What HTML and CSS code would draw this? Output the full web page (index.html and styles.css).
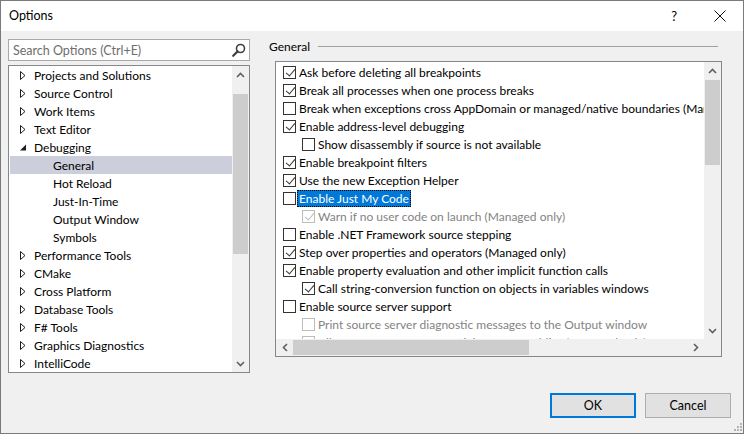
FILE: index.html
```html
<!DOCTYPE html>
<html>
<head>
<meta charset="utf-8">
<link rel="stylesheet" href="styles.css">
</head>
<body>
<div class="window">
  <div class="titlebar">
    <span class="title">Options</span>
    <span class="help">?</span>
    <svg class="close" width="12" height="12" viewBox="0 0 12 12"><path d="M0.5 0.5 L11.5 11.5 M11.5 0.5 L0.5 11.5" stroke="#111" stroke-width="1" fill="none"/></svg>
  </div>
  <div class="content">
    <div class="main">
      <div class="leftcol">
        <div class="search">
          <span class="placeholder">Search Options (Ctrl+E)</span>
          <svg class="mag" width="14" height="14" viewBox="0 0 14 14"><circle cx="8.5" cy="5.5" r="4" stroke="#404040" stroke-width="1.6" fill="none"/><path d="M5.6 8.4 L1.2 12.8" stroke="#404040" stroke-width="2.2" stroke-linecap="round"/></svg>
        </div>
        <div class="tree">
          <div class="treelist">
            <div class="node"><svg class="exp" width="6" height="9" viewBox="0 0 6 9"><path d="M0.5 0.5 L5 4.5 L0.5 8.5 Z" fill="none" stroke="#1e1e1e"/></svg><span>Projects and Solutions</span></div>
            <div class="node"><svg class="exp" width="6" height="9" viewBox="0 0 6 9"><path d="M0.5 0.5 L5 4.5 L0.5 8.5 Z" fill="none" stroke="#1e1e1e"/></svg><span>Source Control</span></div>
            <div class="node"><svg class="exp" width="6" height="9" viewBox="0 0 6 9"><path d="M0.5 0.5 L5 4.5 L0.5 8.5 Z" fill="none" stroke="#1e1e1e"/></svg><span>Work Items</span></div>
            <div class="node"><svg class="exp" width="6" height="9" viewBox="0 0 6 9"><path d="M0.5 0.5 L5 4.5 L0.5 8.5 Z" fill="none" stroke="#1e1e1e"/></svg><span>Text Editor</span></div>
            <div class="node"><svg class="exp" width="6" height="9" viewBox="0 0 6 9"><path d="M6 1.5 L6 7.5 L0 7.5 Z" fill="#1e1e1e"/></svg><span>Debugging</span></div>
            <div class="node child selected"><span>General</span></div>
            <div class="node child"><span>Hot Reload</span></div>
            <div class="node child"><span>Just-In-Time</span></div>
            <div class="node child"><span>Output Window</span></div>
            <div class="node child"><span>Symbols</span></div>
            <div class="node"><svg class="exp" width="6" height="9" viewBox="0 0 6 9"><path d="M0.5 0.5 L5 4.5 L0.5 8.5 Z" fill="none" stroke="#1e1e1e"/></svg><span>Performance Tools</span></div>
            <div class="node"><svg class="exp" width="6" height="9" viewBox="0 0 6 9"><path d="M0.5 0.5 L5 4.5 L0.5 8.5 Z" fill="none" stroke="#1e1e1e"/></svg><span>CMake</span></div>
            <div class="node"><svg class="exp" width="6" height="9" viewBox="0 0 6 9"><path d="M0.5 0.5 L5 4.5 L0.5 8.5 Z" fill="none" stroke="#1e1e1e"/></svg><span>Cross Platform</span></div>
            <div class="node"><svg class="exp" width="6" height="9" viewBox="0 0 6 9"><path d="M0.5 0.5 L5 4.5 L0.5 8.5 Z" fill="none" stroke="#1e1e1e"/></svg><span>Database Tools</span></div>
            <div class="node"><svg class="exp" width="6" height="9" viewBox="0 0 6 9"><path d="M0.5 0.5 L5 4.5 L0.5 8.5 Z" fill="none" stroke="#1e1e1e"/></svg><span>F# Tools</span></div>
            <div class="node"><svg class="exp" width="6" height="9" viewBox="0 0 6 9"><path d="M0.5 0.5 L5 4.5 L0.5 8.5 Z" fill="none" stroke="#1e1e1e"/></svg><span>Graphics Diagnostics</span></div>
            <div class="node"><svg class="exp" width="6" height="9" viewBox="0 0 6 9"><path d="M0.5 0.5 L5 4.5 L0.5 8.5 Z" fill="none" stroke="#1e1e1e"/></svg><span>IntelliCode</span></div>
          </div>
          <div class="vscroll tree-vs">
            <div class="arrow"><svg width="9" height="6" viewBox="0 0 9 6"><path d="M1 5 L4.5 1.5 L8 5" stroke="#606060" stroke-width="1.6" fill="none"/></svg></div>
            <div class="track">
              <div class="gap-top-tree"></div>
              <div class="thumb tree-thumb"></div>
            </div>
            <div class="arrow"><svg width="9" height="6" viewBox="0 0 9 6"><path d="M1 1 L4.5 4.5 L8 1" stroke="#606060" stroke-width="1.6" fill="none"/></svg></div>
          </div>
        </div>
      </div>
      <div class="rightcol">
        <div class="header"><span>General</span><div class="rule"></div></div>
        <div class="panel">
          <div class="rows">
            <div class="row"><span class="cb on"></span><span class="lbl">Ask before deleting all breakpoints</span></div>
            <div class="row"><span class="cb on"></span><span class="lbl">Break all processes when one process breaks</span></div>
            <div class="row"><span class="cb"></span><span class="lbl">Break when exceptions cross AppDomain or managed/native boundaries (Managed only)</span></div>
            <div class="row"><span class="cb on"></span><span class="lbl">Enable address-level debugging</span></div>
            <div class="row sub"><span class="cb"></span><span class="lbl">Show disassembly if source is not available</span></div>
            <div class="row"><span class="cb on"></span><span class="lbl">Enable breakpoint filters</span></div>
            <div class="row"><span class="cb on"></span><span class="lbl">Use the new Exception Helper</span></div>
            <div class="row"><span class="cb"></span><span class="lbl focus">Enable Just My Code</span></div>
            <div class="row sub dis"><span class="cb on"></span><span class="lbl">Warn if no user code on launch (Managed only)</span></div>
            <div class="row"><span class="cb"></span><span class="lbl">Enable .NET Framework source stepping</span></div>
            <div class="row"><span class="cb on"></span><span class="lbl">Step over properties and operators (Managed only)</span></div>
            <div class="row"><span class="cb on"></span><span class="lbl">Enable property evaluation and other implicit function calls</span></div>
            <div class="row sub"><span class="cb on"></span><span class="lbl">Call string-conversion function on objects in variables windows</span></div>
            <div class="row"><span class="cb"></span><span class="lbl">Enable source server support</span></div>
            <div class="row sub dis"><span class="cb"></span><span class="lbl">Print source server diagnostic messages to the Output window</span></div>
            <div class="row sub dis"><span class="cb"></span><span class="lbl">Allow source server for partial trust assemblies (Managed only)</span></div>
          </div>
          <div class="vscroll panel-vs">
            <div class="arrow"><svg width="9" height="6" viewBox="0 0 9 6"><path d="M1 5 L4.5 1.5 L8 5" stroke="#606060" stroke-width="1.6" fill="none"/></svg></div>
            <div class="track">
              <div class="thumb panel-thumb"></div>
            </div>
            <div class="arrow"><svg width="9" height="6" viewBox="0 0 9 6"><path d="M1 1 L4.5 4.5 L8 1" stroke="#606060" stroke-width="1.6" fill="none"/></svg></div>
          </div>
          <div class="hscroll">
            <div class="harrow"><svg width="6" height="9" viewBox="0 0 6 9"><path d="M5 1 L1.5 4.5 L5 8" stroke="#606060" stroke-width="1.6" fill="none"/></svg></div>
            <div class="htrack"><div class="hthumb"></div></div>
            <div class="harrow"><svg width="6" height="9" viewBox="0 0 6 9"><path d="M1 1 L4.5 4.5 L1 8" stroke="#606060" stroke-width="1.6" fill="none"/></svg></div>
          </div>
          <div class="corner"></div>
        </div>
      </div>
    </div>
    <div class="footer">
      <div class="btn default">OK</div>
      <div class="btn">Cancel</div>
    </div>
  </div>
  <div class="grip">
    <i class="d1"></i><i class="d2"></i><i class="d3"></i><i class="d4"></i><i class="d5"></i><i class="d6"></i>
  </div>
</div>
</body>
</html>
```
FILE: styles.css
```css
* { box-sizing: border-box; }
html, body { margin: 0; padding: 0; }
body {
  font-family: Lato, "Liberation Sans", sans-serif;
  font-size: 12px;
  color: #000;
  background: #fff;
}
.window {
  position: relative;
  width: 744px;
  height: 434px;
  border: 1px solid #7a7a7a;
  display: flex;
  flex-direction: column;
  background: #f0f0f0;
}
.titlebar {
  height: 30px;
  background: #fff;
  display: flex;
  align-items: center;
  padding-left: 8px;
}
.title { font-size: 12.5px; flex: 1; padding-bottom: 1px; }
.help { font-size: 13px; margin-right: 37px; padding-bottom: 1px; }
.close { margin-right: 17px; }
.content {
  flex: 1;
  display: flex;
  flex-direction: column;
  padding: 8px 0 0 7px;
}
.main { display: flex; }
.leftcol { width: 242px; display: flex; flex-direction: column; }
.search {
  height: 22px;
  border: 1px solid #a9a9a9;
  background: #fff;
  display: flex;
  align-items: center;
  padding-left: 4px;
  padding-right: 3px;
}
.placeholder { flex: 1; color: #6d6d6d; font-size: 12.5px; }
.tree {
  margin-top: 4px;
  height: 308px;
  border: 1px solid #828790;
  background: #fff;
  display: flex;
  padding-left: 1px;
}
.treelist { flex: 1; overflow: hidden; }
.node {
  height: 18px;
  display: flex;
  align-items: center;
  padding-left: 10px;
  white-space: nowrap;
}
.node span { padding-top: 1px; }
.node .exp { margin-right: 8px; }
.node.child { padding-left: 43px; }
.node.selected { background: #cccedb; }
.vscroll {
  width: 17px;
  background: #f0f0f0;
  display: flex;
  flex-direction: column;
}
.arrow { height: 17px; display: flex; align-items: center; justify-content: center; }
.track { flex: 1; display: flex; flex-direction: column; padding: 0 1px; }
.gap-top-tree { height: 11px; }
.thumb { background: #cdcdcd; }
.tree-thumb { height: 160px; }
.panel-thumb { height: 85px; margin-top: 1px; }

.rightcol { width: 453px; margin-left: 19px; display: flex; flex-direction: column; }
.header {
  height: 16px;
  margin-top: -1px;
  display: flex;
  align-items: center;
}
.rule { flex: 1; height: 1px; background: #a0a0a0; margin: 1px 4px 0 8px; }
.panel {
  margin-top: 7px;
  margin-left: 6px;
  width: 447px;
  height: 296px;
  border: 1px solid #828790;
  background: #fff;
  display: grid;
  grid-template-columns: 1fr 17px;
  grid-template-rows: 1fr 17px;
}
.rows { overflow: hidden; padding-top: 1px; }
.panel-vs { grid-column: 2; grid-row: 1; }
.hscroll {
  grid-column: 1; grid-row: 2;
  background: #f0f0f0;
  display: flex;
}
.harrow { width: 17px; display: flex; align-items: center; justify-content: center; }
.htrack { flex: 1; display: flex; align-items: stretch; padding: 1px 0; }
.hthumb { width: 236px; background: #cdcdcd; }
.corner { grid-column: 2; grid-row: 2; background: #f0f0f0; }
.row {
  height: 18px;
  display: flex;
  align-items: center;
  padding-left: 7px;
  white-space: nowrap;
}
.row.sub { padding-left: 26px; }
.cb {
  width: 13px; height: 13px;
  border: 1px solid #333;
  background: #fff;
  flex: none;
  position: relative;
}
.cb.on::after {
  content: "";
  position: absolute;
  top: 0px;
  width: 4px; height: 8px;
  border-right: 1.3px solid #333;
  border-bottom: 1.3px solid #333;
  transform: rotate(40deg);
  transform-origin: center;
  left: 3.5px;
}
.lbl { margin-left: 1px; padding: 1px 2px 0; line-height: 16px; height: 17px; }
.lbl.focus { background: #0078d7; color: #fff; outline: 1px dotted #000; outline-offset: -1px; }
.dis .cb { border-color: #bcbcbc; }
.dis .cb.on::after { border-color: #bcbcbc; }
.dis .lbl { color: #838383; }

.footer {
  margin-top: 20px;
  display: flex;
  justify-content: flex-end;
  gap: 9px;
  padding-right: 12px;
}
.btn {
  width: 86px; height: 25px;
  background: #e1e1e1;
  border: 1px solid #adadad;
  display: flex;
  align-items: center;
  justify-content: center;
  font-size: 12.5px;
}
.btn.default { border: 2px solid #0078d7; }
.grip { position: absolute; right: 1px; bottom: 1px; width: 9px; height: 9px; }
.grip i { position: absolute; width: 2px; height: 2px; background: #b4b4b4; }
.grip .d1 { right: 0; top: 0; }
.grip .d2 { right: 0; top: 3px; }
.grip .d3 { right: 3px; top: 3px; }
.grip .d4 { right: 0; top: 6px; }
.grip .d5 { right: 3px; top: 6px; }
.grip .d6 { right: 6px; top: 6px; }
```
